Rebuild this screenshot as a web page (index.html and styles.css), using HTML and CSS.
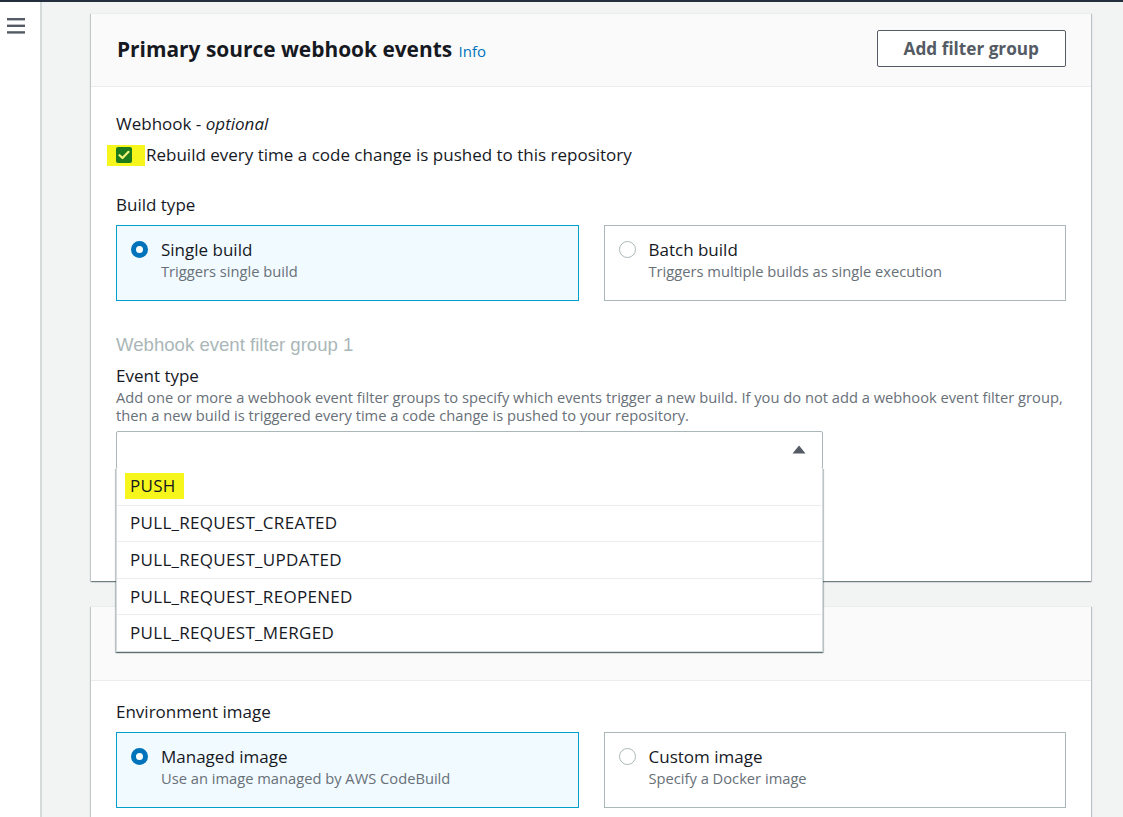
FILE: index.html
```html
<!DOCTYPE html>
<html lang="en">
<head>
<meta charset="utf-8">
<title>Primary source webhook events</title>
<link rel="stylesheet" href="styles.css">
</head>
<body>
<div class="layout">
  <aside class="sidebar">
    <svg class="hamburger" width="18" height="16" viewBox="0 0 18 16" aria-hidden="true">
      <rect x="0" y="0" width="18" height="2.4" fill="#545b64"/>
      <rect x="0" y="6.6" width="18" height="2.4" fill="#545b64"/>
      <rect x="0" y="13.2" width="18" height="2.4" fill="#545b64"/>
    </svg>
  </aside>
  <main class="content">
    <section class="panel">
      <header class="panel-header">
        <h2 class="panel-title">Primary source webhook events <a class="info" href="#">Info</a></h2>
        <button class="btn">Add filter group</button>
      </header>
      <div class="panel-body panel-body--tall">
        <div class="label">Webhook - <i>optional</i></div>
        <label class="check-row">
          <span class="hl-box"><span class="checkbox"><svg width="12" height="10" viewBox="0 0 12 10"><path d="M1.5 5.2 L4.5 8 L10.5 1.8" fill="none" stroke="#f4f47a" stroke-width="2.2" stroke-linecap="round" stroke-linejoin="round"/></svg></span></span>
          <span>Rebuild every time a code change is pushed to this repository</span>
        </label>

        <div class="label label--gap">Build type</div>
        <div class="tiles">
          <div class="tile tile--selected">
            <span class="radio radio--on"></span>
            <div class="tile-text">
              <div class="tile-title">Single build</div>
              <div class="tile-desc">Triggers single build</div>
            </div>
          </div>
          <div class="tile">
            <span class="radio"></span>
            <div class="tile-text">
              <div class="tile-title">Batch build</div>
              <div class="tile-desc">Triggers multiple builds as single execution</div>
            </div>
          </div>
        </div>

        <div class="group-title">Webhook event filter group 1</div>
        <div class="label label--tight">Event type</div>
        <div class="desc">Add one or more a webhook event filter groups to specify which events trigger a new build. If you do not add a webhook event filter group, then a new build is triggered every time a code change is pushed to your repository.</div>
        <div class="select-wrap">
          <div class="select">
            <svg class="caret" width="14" height="9" viewBox="0 0 14 9"><path d="M7 0.5 L13.5 8.5 L0.5 8.5 Z" fill="#545b64"/></svg>
          </div>
          <ul class="menu">
            <li class="menu-item"><span class="hl-text">PUSH</span></li>
            <li class="menu-item">PULL_REQUEST_CREATED</li>
            <li class="menu-item">PULL_REQUEST_UPDATED</li>
            <li class="menu-item">PULL_REQUEST_REOPENED</li>
            <li class="menu-item">PULL_REQUEST_MERGED</li>
          </ul>
        </div>
      </div>
    </section>

    <section class="panel">
      <header class="panel-header panel-header--plain"></header>
      <div class="panel-body panel-body--env">
        <div class="label">Environment image</div>
        <div class="tiles">
          <div class="tile tile--selected">
            <span class="radio radio--on"></span>
            <div class="tile-text">
              <div class="tile-title">Managed image</div>
              <div class="tile-desc">Use an image managed by AWS CodeBuild</div>
            </div>
          </div>
          <div class="tile">
            <span class="radio"></span>
            <div class="tile-text">
              <div class="tile-title">Custom image</div>
              <div class="tile-desc">Specify a Docker image</div>
            </div>
          </div>
        </div>
      </div>
    </section>
  </main>
</div>
</body>
</html>
```

FILE: styles.css
```css
html, body {
  margin: 0;
  padding: 0;
  height: 100%;
  overflow: hidden;
}

body {
  font-family: "Open Sans", "Noto Sans", sans-serif;
  color: #16191f;
  background: #f2f3f3;
  border-top: 2px solid #232f3e;
  box-sizing: border-box;
}

.layout {
  display: flex;
  height: 100%;
}

.sidebar {
  width: 42px;
  flex-shrink: 0;
  background: #ffffff;
  border-right: 2px solid #d5dbdb;
  padding: 16px 0 0 7px;
  box-sizing: border-box;
}

.hamburger {
  display: block;
}

.content {
  flex: 1;
  padding: 11px 32px 0 49px;
  min-width: 0;
}

.panel {
  background: #ffffff;
  border-top: 1px solid #eaeded;
  box-shadow: 0 1px 1px 0 rgba(0, 28, 36, 0.35), 1px 1px 1px 0 rgba(0, 28, 36, 0.18), -1px 1px 1px 0 rgba(0, 28, 36, 0.15);
}

.panel + .panel {
  margin-top: 25px;
}

.panel-header {
  display: flex;
  align-items: center;
  justify-content: space-between;
  height: 72px;
  padding: 0 25px 0 26px;
  background: #fafafa;
  border-bottom: 1px solid #eaeded;
}

.panel-header--plain {
  height: 73px;
}

.panel-title {
  margin: 0;
  font-size: 20.9px;
  font-weight: 700;
  line-height: 26px;
  color: #16191f;
}

.info {
  font-size: 15px;
  font-weight: 400;
  color: #0073bb;
  text-decoration: none;
  margin-left: 1px;
}

.btn {
  height: 37px;
  margin-bottom: 3px;
  padding: 0 26px;
  background: #ffffff;
  border: 1px solid #545b64;
  border-radius: 2px;
  font-family: inherit;
  font-size: 17.2px;
  font-weight: 700;
  color: #545b64;
}

.panel-body {
  padding: 20px 25px 30px 25px;
  position: relative;
}

.panel-body--tall {
  padding-top: 26px;
  padding-bottom: 112px;
}

.panel-body--env {
  padding-top: 20px;
}

.label {
  font-size: 17px;
  line-height: 22px;
}

.label--gap {
  margin-top: 28px;
}

.label--tight {
  margin-top: 9px;
}

.check-row {
  display: flex;
  align-items: center;
  margin-top: 9px;
  font-size: 17px;
  line-height: 22px;
}

.hl-box {
  display: flex;
  align-items: center;
  background: #f6f61c;
  margin-left: -9px;
  padding: 2px 13px 3px 9px;
  margin-top: 1px;
  margin-right: 1px;
}

.checkbox {
  width: 16px;
  height: 16px;
  border-radius: 2px;
  background: #1e7b1c;
  display: flex;
  align-items: center;
  justify-content: center;
}

.tiles {
  display: grid;
  grid-template-columns: 1fr 1fr;
  gap: 25px;
  margin-top: 9px;
}

.tile {
  display: flex;
  align-items: flex-start;
  gap: 13px;
  height: 76px;
  box-sizing: border-box;
  padding: 13px 14px 0 14px;
  border: 1px solid #aab7b8;
  background: #ffffff;
}

.tile--selected {
  background: #f1faff;
  border-color: #00a1c9;
}

.radio {
  width: 17px;
  height: 17px;
  box-sizing: border-box;
  border-radius: 50%;
  border: 1px solid #aab7b8;
  background: #ffffff;
  margin-top: 2px;
  flex-shrink: 0;
}

.radio--on {
  border: 5px solid #0073bb;
}

.tile-title {
  font-size: 17px;
  line-height: 22px;
}

.tile-desc {
  font-size: 14.7px;
  line-height: 20px;
  color: #687078;
}

.group-title {
  margin-top: 33px;
  font-family: "Liberation Sans", Arial, sans-serif;
  font-size: 18.6px;
  line-height: 22px;
  color: #aab7b8;
}

.desc {
  margin-top: 1px;
  font-size: 14.7px;
  line-height: 18px;
  color: #687078;
}

.select-wrap {
  position: relative;
  width: 707px;
  margin-top: 7px;
}

.select {
  height: 38px;
  box-sizing: border-box;
  border: 1px solid #aab7b8;
  border-radius: 2px;
  background: #ffffff;
  display: flex;
  align-items: center;
  justify-content: flex-end;
  padding-right: 16px;
}

.caret {
  display: block;
  margin-top: -2px;
}

.menu {
  position: absolute;
  top: 37px;
  left: 0;
  right: 0;
  margin: 0;
  padding: 0;
  list-style: none;
  background: #ffffff;
  border: 1px solid #d5dbdb;
  border-top: none;
  box-shadow: 0 1px 1px 0 rgba(0, 28, 36, 0.4), 1px 1px 1px 0 rgba(0, 28, 36, 0.2), -1px 1px 1px 0 rgba(0, 28, 36, 0.2);
  z-index: 5;
}

.menu-item {
  display: flex;
  align-items: center;
  height: 36.6px;
  box-sizing: border-box;
  padding: 0 13px;
  font-size: 17px;
  line-height: 22px;
  letter-spacing: 0.3px;
  color: #16191f;
}

.menu-item + .menu-item {
  border-top: 1px solid #eaeded;
}

.hl-text {
  background: #f6f61c;
  margin-left: -5px;
  padding: 2px 8px 2px 5px;
}
```
